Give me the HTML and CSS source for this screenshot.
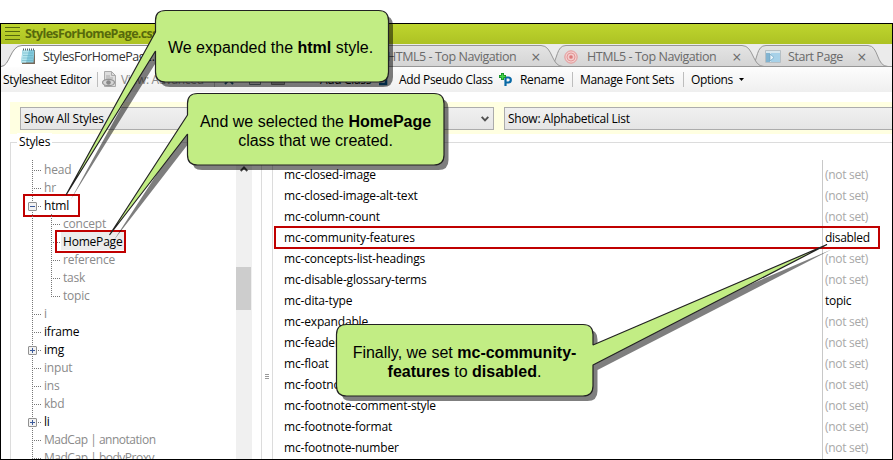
FILE: index.html
```html
<!DOCTYPE html>
<html lang="en">
<head>
<meta charset="utf-8">
<title>Stylesheet Editor</title>
<link rel="stylesheet" href="styles.css">
</head>
<body>
<div class="window">
  <header class="titlebar">
    <svg class="menu-icon" width="15" height="14" viewBox="0 0 15 14"><path d="M0 .5H15M0 4.5H15M0 8.5H15M0 12.5H15" stroke="#56690c"/></svg>
    <span class="title">StylesForHomePage.css</span>
  </header>
  <nav class="tabs">
    <svg class="tab-shapes" width="891" height="23" viewBox="1 44 891 23">
      <defs><linearGradient id="tabfill" x1="0" y1="0" x2="0" y2="1"><stop offset="0" stop-color="#e4e4e4"/><stop offset="1" stop-color="#d4d4d4"/></linearGradient></defs>
      <path class="tab-off" d="M752 67C758 60 756 45.500 766 45.500H868C879 45.500 876 66.500 888 66.500Z"/>
      <path class="tab-off" d="M551 67C558 60 556 45.500 566 45.500H742C754 45.500 752 66.500 764 66.500Z"/>
      <path class="tab-off" d="M340 67C347 60 348 45.500 358 45.500H541C553 45.500 551 66.500 563 66.500Z"/>
      <path d="M1 66.500H892" stroke="#979797"/>
      <path d="M1 67.500V66.500C10 66.500 10 45.500 22 45.500H190V67.500Z" fill="#fff"/>
      <path d="M1 66.500C10 66.500 10 45.500 22 45.500H190" fill="none" stroke="#8e8e8e"/>
    </svg>
    <div class="tab tab-one"><svg width="16" height="17" viewBox="0 0 16 17"><path d="M2 2H14V16H1Z" fill="#77695a"/><path d="M1.500 2H13.500L12.500 14.500H0Z" fill="#83c9dc"/><path d="M2 2H8L5 14.500H0Z" fill="#b4e4ed"/><path d="M2 5H12M2 7.500H12M1.500 10H12M1 12.500H12" stroke="#5daabd" stroke-width=".5"/><path d="M2 1.500H14" stroke="#50616a" stroke-width="2" stroke-dasharray="1 1"/></svg><span>StylesForHomePage.css</span></div>
    <div class="tab tab-two"><span>HTML5 - Top Navigation</span><i>×</i></div>
    <div class="tab tab-three"><svg width="14" height="14" viewBox="0 0 14 14" fill="none" stroke="#e39898"><circle cx="7" cy="7" r="6.200" fill="#f3cccc"/><circle cx="7" cy="7" r="4"/><circle cx="7" cy="7" r="1.600" fill="#dc7777"/></svg><span>HTML5 - Top Navigation</span><i>×</i></div>
    <div class="tab tab-four"><svg width="16" height="13" viewBox="0 0 16 13"><path d="M.5.500H15.500V12.500H.500Z" fill="#d8e7ee" stroke="#b6bfc4"/><path d="M1 3H5V12H1Z" fill="#82b4d1"/><path d="M6 3H15V12H6Z" fill="#a7d1e8"/><path d="M5 4L9 7.500L5 11Z" fill="#eaf5fa" stroke="#6fa3c1" stroke-width=".7"/></svg><span>Start Page</span><i>×</i></div>
  </nav>
  <div class="toolbar">
    <span class="tool t-editor">Stylesheet Editor</span>
    <b class="rule"></b>
    <svg class="t-eye" width="15" height="17" viewBox="0 0 15 17"><path d="M2.500.500H9.500L13.500 4.500V15.500H2.500Z" fill="#ddd" stroke="#aaa"/><path d="M9.500.500V4.500H13.500M4 5H8M4 7H11" fill="none" stroke="#aaa"/><ellipse cx="6.500" cy="11.500" rx="6" ry="3.200" fill="#d5d5d5" stroke="#959595" stroke-width="1.300"/><circle cx="6.500" cy="11.500" r="2.300" fill="#888"/></svg>
    <span class="tool t-view">View: Advanced</span>
    <b class="rule"></b>
    <svg class="t-icons" width="75" height="17" viewBox="0 0 75 17"><path d="M2 4L10 13M10 4L2 13" stroke="#1c5275" stroke-width="2"/><path d="M26.500 3.500H37.500V13.500H26.500ZM30 6H35M30 9H35" fill="#ddd" stroke="#6c7880"/><path d="M48.500 4.500H61.500V13.500H48.500Z" fill="#aaa" stroke="#777"/></svg>
    <span class="tool t-class">Add Class</span>
    <svg class="t-s" width="14" height="17" viewBox="0 0 14 17"><path d="M11 5H5V8.500H11V13H4" fill="none" stroke="#07568c" stroke-width="2.600"/></svg>
    <span class="tool t-pseudo">Add Pseudo Class</span>
    <svg class="t-p" width="13" height="13" viewBox="0 0 13 13"><path d="M6.500 13V4.500H9.300A2.200 2.200 0 0 1 9.300 9.500H6.500" fill="none" stroke="#0869a6" stroke-width="2.200"/><path d="M3.500 0V7M0 3.500H7" stroke="#128a22" stroke-width="3"/><path d="M3.500.700V6.300M.700 3.500H6.300" stroke="#45d44c" stroke-width="1.500"/></svg>
    <span class="tool t-rename">Rename</span>
    <b class="rule"></b>
    <span class="tool t-fonts">Manage Font Sets</span>
    <b class="rule"></b>
    <span class="tool t-options">Options</span>
    <svg class="caret" width="5" height="3" viewBox="0 0 5 3"><path d="M0 0H5L2.500 3Z"/></svg>
  </div>
  <div class="filters">
    <div class="combo combo-left"><span>Show All Styles</span><svg width="8" height="6" viewBox="0 0 8 6"><path d="M.7.800L4 4.300L7.300.800" fill="none" stroke="#505050" stroke-width="1.900"/></svg></div>
    <div class="combo combo-right"><span>Show: Alphabetical List</span></div>
  </div>
  <main class="panes">
    <section class="styles-pane">
      <span class="legend">Styles</span>
      <ul class="tree">
        <li>head</li>
        <li>hr</li>
        <li class="set"><b class="toggle minus"></b>html<em class="mark mark-html"></em></li>
        <li class="sub">concept</li>
        <li class="sub set picked"><span>HomePage</span><em class="mark mark-home"></em></li>
        <li class="sub">reference</li>
        <li class="sub">task</li>
        <li class="sub last">topic</li>
        <li>i</li>
        <li class="set">iframe</li>
        <li class="set"><b class="toggle plus"></b>img</li>
        <li>input</li>
        <li>ins</li>
        <li>kbd</li>
        <li class="set"><b class="toggle plus"></b>li</li>
        <li class="wide">MadCap | annotation</li>
        <li class="wide">MadCap | bodyProxy</li>
      </ul>
      <div class="scroll"><svg width="8" height="6" viewBox="0 0 8 6"><path d="M.7 5L4 1.500L7.300 5" fill="none" stroke="#404040" stroke-width="1.900"/></svg><div class="thumb"></div></div>
    </section>
    <div class="splitter"><i></i><i></i><i></i></div>
    <section class="props">
      <div class="names">
        <p>mc-closed-image</p><p>mc-closed-image-alt-text</p><p>mc-column-count</p><p>mc-community-features</p><p>mc-concepts-list-headings</p><p>mc-disable-glossary-terms</p><p>mc-dita-type</p><p>mc-expandable</p><p>mc-feader</p><p>mc-float</p><p>mc-footnote</p><p>mc-footnote-comment-style</p><p>mc-footnote-format</p><p>mc-footnote-number</p>
      </div>
      <div class="values">
        <p>(not set)</p><p>(not set)</p><p>(not set)</p><p class="on">disabled</p><p>(not set)</p><p>(not set)</p><p class="on">topic</p><p>(not set)</p><p>(not set)</p><p>(not set)</p><p>(not set)</p><p>(not set)</p><p>(not set)</p><p>(not set)</p>
      </div>
      <em class="mark mark-row"></em>
    </section>
  </main>
</div>
<svg class="bubbles" width="893" height="460" viewBox="0 0 893 460">
  <defs>
    <path id="b1" d="M165.500 10.500H378.500Q388.500 10.500 388.500 20.500V72Q388.500 82 378.500 82H165.500Q155.500 82 155.500 72V51L66 195L155.500 32V20.500Q155.500 10.500 165.500 10.500Z"/>
    <path id="b2" d="M197.500 93.500H434Q444 93.500 444 103.500V155Q444 165 434 165H197.500Q187.500 165 187.500 155V134L109.500 235L187.500 115V103.500Q187.500 93.500 197.500 93.500Z"/>
    <path id="b3" d="M346.500 324.500H583Q593 324.500 593 334.500V345L827 244.500L593 365V386Q593 396 583 396H346.500Q336.500 396 336.500 386V334.500Q336.500 324.500 346.500 324.500Z"/>
  </defs>
  <g class="shade"><use href="#b1"/><use href="#b2"/><use href="#b3"/></g>
  <g class="bubble"><use href="#b1"/><use href="#b2"/><use href="#b3"/></g>
</svg>
<div class="note note-one">We expanded the <b>html</b> style.</div>
<div class="note note-two">And we selected the <b>HomePage</b><br>class that we created.</div>
<div class="note note-three">Finally, we set <b>mc-community-</b><br><b>features</b> to <b>disabled</b>.</div>
</body>
</html>
```
FILE: styles.css
```css
* { box-sizing: border-box; }
body {
  margin: 0;
  padding-top: 23px;
  width: 893px;
  height: 460px;
  overflow: hidden;
  position: relative;
  background: #fff;
  color: #000;
  font: 12px/18px "Open Sans", sans-serif;
  letter-spacing: -0.2px;
  white-space: nowrap;
}
svg { display: block; flex: none; }
.window {
  height: 437px;
  border: 1px solid #000;
  display: flex;
  flex-direction: column;
  overflow: hidden;
}
.titlebar {
  height: 20px;
  flex: none;
  display: flex;
  align-items: center;
  padding-left: 4px;
  background: linear-gradient(#bed52e, #adc224);
}
.title {
  margin-left: 5px;
  color: #56690c;
  font-size: 12.5px;
  font-weight: 700;
  letter-spacing: -0.65px;
}
.tabs {
  height: 23px;
  flex: none;
  position: relative;
  display: flex;
  background: #ebebeb;
}
.tab-shapes { position: absolute; left: 0; top: 0; }
.tab-off { fill: url(#tabfill); stroke: #979797; }
.tab {
  position: relative;
  display: flex;
  align-items: center;
  padding-top: 2px;
  padding-right: 1px;
  font-size: 12.5px;
  letter-spacing: -0.45px;
  color: #6a6a6a;
}
.tab i {
  margin-left: auto;
  font: 16px/16px "Open Sans", sans-serif;
}
.tab-one { width: 386px; padding-left: 20px; gap: 6px; color: #333; }
.tab-two { width: 154px; }
.tab-three { width: 201px; padding-left: 23px; gap: 9px; }
.tab-four { width: 125px; padding-left: 23px; gap: 7px; }
.toolbar {
  height: 25px;
  flex: none;
  display: flex;
  align-items: center;
  padding-left: 2px;
  background: linear-gradient(#fdfdfd, #efefef);
  letter-spacing: -0.33px;
}
.tool { flex: none; }
.rule { flex: none; width: 1px; height: 15px; background: #bdbdbd; }
.t-editor { width: 94px; }
.t-eye { margin-left: 4px; }
.t-view { width: 93px; margin-left: 4px; color: #888; }
.t-icons { margin-left: 8px; }
.t-class { width: 55px; margin-left: 22px; }
.t-s { margin-right: 10px; }
.t-pseudo { width: 100px; }
.t-rename { width: 52px; margin-left: 8px; }
.t-fonts { width: 103px; margin-left: 7px; }
.t-options { width: 48px; margin-left: 7px; }
.filters {
  height: 32px;
  flex: none;
  margin: 10px 0 0 9px;
  padding: 5px 0 4px 10px;
  background: #ffffe1;
  display: flex;
  gap: 10px;
}
.combo {
  height: 23px;
  border: 1px solid #acacac;
  background: linear-gradient(#f0f0f0, #e5e5e5);
  display: flex;
  align-items: center;
  justify-content: space-between;
  padding: 0 4px 0 3px;
}
.combo-left { width: 474px; flex: none; }
.combo-right { flex: 1; border-right: 0; letter-spacing: -0.27px; }
.panes { flex: 1; min-height: 0; display: flex; margin: 8px 0 0 9px; }
.styles-pane {
  width: 252px;
  flex: none;
  position: relative;
  display: flex;
  border: 1px solid #dcdcdc;
  border-bottom: 0;
  padding: 17px 9px 0 17px;
}
.legend {
  position: absolute;
  left: 6px;
  top: -10px;
  padding: 0 2px;
  background: #fff;
}
.tree { flex: 1; margin: 0; padding: 0; list-style: none; }
.tree li {
  height: 18px;
  line-height: 20px;
  position: relative;
  padding-left: 16px;
  color: #8a8a8a;
  background:
    repeating-linear-gradient(to bottom, #777 0 1px, transparent 1px 2px) 4px 0 / 1px 18px no-repeat,
    repeating-linear-gradient(to right, #777 0 1px, transparent 1px 2px) 6px 10px / 7px 1px no-repeat;
}
.tree .sub {
  padding-left: 35px;
  background:
    repeating-linear-gradient(to bottom, #777 0 1px, transparent 1px 2px) 4px 0 / 1px 18px no-repeat,
    repeating-linear-gradient(to bottom, #777 0 1px, transparent 1px 2px) 23px 0 / 1px 18px no-repeat,
    repeating-linear-gradient(to right, #777 0 1px, transparent 1px 2px) 25px 10px / 7px 1px no-repeat;
}
.tree .last { background-size: 1px 18px, 1px 11px, 7px 1px; }
.tree .set { color: #000; }
.tree .wide { letter-spacing: -0.48px; }
.picked span {
  display: inline-block;
  height: 18px;
  margin-left: -2px;
  padding: 0 2px;
  background: #ececec;
}
.toggle {
  position: absolute;
  left: 0;
  top: 6px;
  width: 9px;
  height: 9px;
  border: 1px solid #919191;
  border-radius: 1px;
  background: linear-gradient(#3b5a9a, #3b5a9a) 1px 3px / 5px 1px no-repeat, #f2f2f2;
}
.plus {
  background:
    linear-gradient(#3b5a9a, #3b5a9a) 1px 3px / 5px 1px no-repeat,
    linear-gradient(#3b5a9a, #3b5a9a) 3px 1px / 1px 5px no-repeat, #f2f2f2;
}
.mark { position: absolute; border: 2px solid #c00000; }
.mark-html { left: -5px; top: -2px; width: 57px; height: 23px; }
.mark-home { left: 27px; top: -2px; width: 71px; height: 23px; }
.scroll {
  width: 16px;
  flex: none;
  background: #f0f0f0;
  display: flex;
  flex-direction: column;
  align-items: center;
  padding-top: 6px;
}
.thumb { width: 15px; height: 43px; margin: 95px 1px 0 0; background: #cdcdcd; }
.splitter {
  width: 10px;
  flex: none;
  display: flex;
  flex-direction: column;
  align-items: center;
  gap: 1px;
  padding-top: 232px;
}
.splitter i { width: 4px; height: 1px; background: #999; }
.props {
  flex: 1;
  position: relative;
  display: flex;
  border: 1px solid #dcdcdc;
  border-width: 1px 0 0 1px;
  line-height: 21px;
}
.props p { margin: 0; height: 21px; }
.names { width: 549px; flex: none; padding: 21px 0 0 11px; letter-spacing: -0.17px; }
.values {
  flex: 1;
  margin-top: 17px;
  padding: 4px 0 0 2px;
  border-left: 1px solid #c8c8c8;
  color: #a8a8a8;
  letter-spacing: -0.3px;
}
.values .on { color: #000; }
.mark-row { left: 1px; top: 83px; width: 606px; height: 23px; }
.bubbles { position: absolute; left: 0; top: 0; }
.shade { fill: #000; opacity: .5; transform: translate(4.500px, 5px); }
.bubble { fill: #c2ed84; stroke: #222; stroke-width: 1.200; stroke-linejoin: bevel; }
.note {
  position: absolute;
  text-align: center;
  font: 16px/19px "Liberation Sans", sans-serif;
  letter-spacing: 0;
}
.note-one { left: 154px; top: 38px; width: 233px; }
.note-two { left: 187px; top: 112px; width: 257px; }
.note-three { left: 336px; top: 343px; width: 257px; }
```
